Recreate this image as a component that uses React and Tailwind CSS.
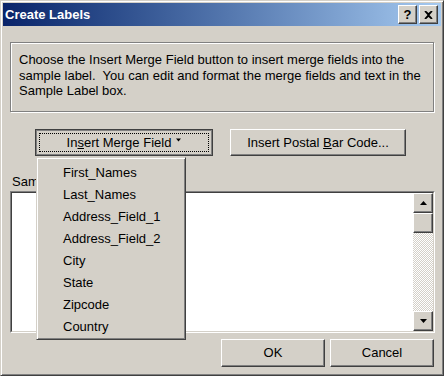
import React from "react";

const raised =
  "border border-t-white border-l-white border-r-[#404040] border-b-[#404040] shadow-[inset_-1px_-1px_0_#808080] bg-[#d4d0c8]";

function Tri({ down = true, className = "" }) {
  return (
    <svg width="7" height="4" viewBox="0 0 7 4" className={className}>
      {down ? (
        <path d="M0 0h7L3.5 4z" fill="#000" />
      ) : (
        <path d="M0 4h7L3.5 0z" fill="#000" />
      )}
    </svg>
  );
}

function CaptionButton({ children }) {
  return (
    <div
      className={
        raised +
        " grid h-[19px] w-[19px] place-items-center text-[13px] font-bold leading-none text-black"
      }
    >
      {children}
    </div>
  );
}

function Btn({ children, className = "" }) {
  return (
    <div
      className={
        raised +
        " flex items-center justify-center text-[13px] text-black " +
        className
      }
    >
      {children}
    </div>
  );
}

const fields = [
  "First_Names",
  "Last_Names",
  "Address_Field_1",
  "Address_Field_2",
  "City",
  "State",
  "Zipcode",
  "Country",
];

export default function App() {
  return (
    <div className="relative flex h-[376px] w-[444px] flex-col border border-t-[#d4d0c8] border-l-[#d4d0c8] border-r-[#404040] border-b-[#404040] bg-[#d4d0c8] p-[2px] font-['Liberation_Sans',Arial,sans-serif] shadow-[inset_1px_1px_0_#fff,inset_-1px_-1px_0_#808080]">
      {/* title bar */}
      <div className="flex h-[23px] items-center justify-between bg-gradient-to-r from-[#0a246a] to-[#a6caf0] pl-[2px] pr-[3px]">
        <div className="text-[13px] font-bold text-white">Create Labels</div>
        <div className="flex gap-[2px]">
          <CaptionButton>?</CaptionButton>
          <CaptionButton>
            <svg width="9" height="8" viewBox="0 0 9 8">
              <path d="M1 0l3.5 3L8 0M1 8l3.5-3L8 8M1 0l7 8M8 0L1 8" stroke="#000" strokeWidth="1.6" fill="none" />
            </svg>
          </CaptionButton>
        </div>
      </div>

      <div className="flex flex-1 flex-col px-[7px]">
        {/* instructions */}
        <div className="mt-[16px] h-[70px] border border-[#808080] pl-[8px] pt-[9px] text-[13px] leading-[15.5px] text-black shadow-[inset_1px_1px_0_#fff,1px_1px_0_#fff]">
          Choose the Insert Merge Field button to insert merge fields into the
          sample label.&nbsp; You can edit and format the merge fields and text
          in the Sample Label box.
        </div>

        {/* buttons */}
        <div className="mt-[17px] flex">
          <div className="ml-[25px] flex h-[27px] w-[178px] border border-[#404040] bg-[#d4d0c8] p-[3px] shadow-[inset_0_0_0_1px_#808080]">
            <div className="flex flex-1 items-center justify-center gap-[5px] border border-dotted border-black text-[13px] text-black">
              <span>
                In<u>s</u>ert Merge Field
              </span>
              <Tri className="mb-[5px] w-[5px]" />
            </div>
          </div>
          <Btn className="ml-[17px] h-[27px] w-[176px]">
            <span>
              Insert Postal <u>B</u>ar Code...
            </span>
          </Btn>
        </div>

        <div className="ml-[2px] mt-[18px] text-[13px] leading-[15px] text-black">
          Sample Label:
        </div>

        {/* sample text area */}
        <div className="mt-[2px] flex h-[142px] w-[425px] border border-t-[#808080] border-l-[#808080] border-r-white border-b-white">
          <div className="flex flex-1 border border-t-[#404040] border-l-[#404040] border-r-[#d4d0c8] border-b-[#d4d0c8] bg-white">
            <div className="flex-1" />
            <div className="flex w-[20px] flex-col">
              <div className={raised + " grid h-[20px] place-items-center"}>
                <Tri down={false} />
              </div>
              <div className={raised + " h-[20px]"} />
              <div className="flex-1 bg-[repeating-conic-gradient(#d4d0c8_0_25%,#fff_0_50%)] bg-[length:2px_2px]" />
              <div className={raised + " grid h-[20px] place-items-center"}>
                <Tri />
              </div>
            </div>
          </div>
        </div>

        {/* ok / cancel */}
        <div className="ml-[211px] mt-[6px] flex gap-[5px]">
          <Btn className="h-[28px] w-[105px]">OK</Btn>
          <Btn className="h-[28px] w-[105px]">Cancel</Btn>
        </div>
      </div>

      {/* dropdown menu */}
      <div className="absolute left-[35px] top-[156px] flex w-[150px] flex-col border border-t-[#d4d0c8] border-l-[#d4d0c8] border-r-[#404040] border-b-[#404040] bg-[#d4d0c8] pt-[4px] pb-[1px] shadow-[inset_1px_1px_0_#fff,inset_-1px_-1px_0_#808080]">
        {fields.map((f) => (
          <div
            key={f}
            className="flex h-[22px] items-center pl-[26px] text-[13px] text-black"
          >
            {f}
          </div>
        ))}
      </div>
    </div>
  );
}
